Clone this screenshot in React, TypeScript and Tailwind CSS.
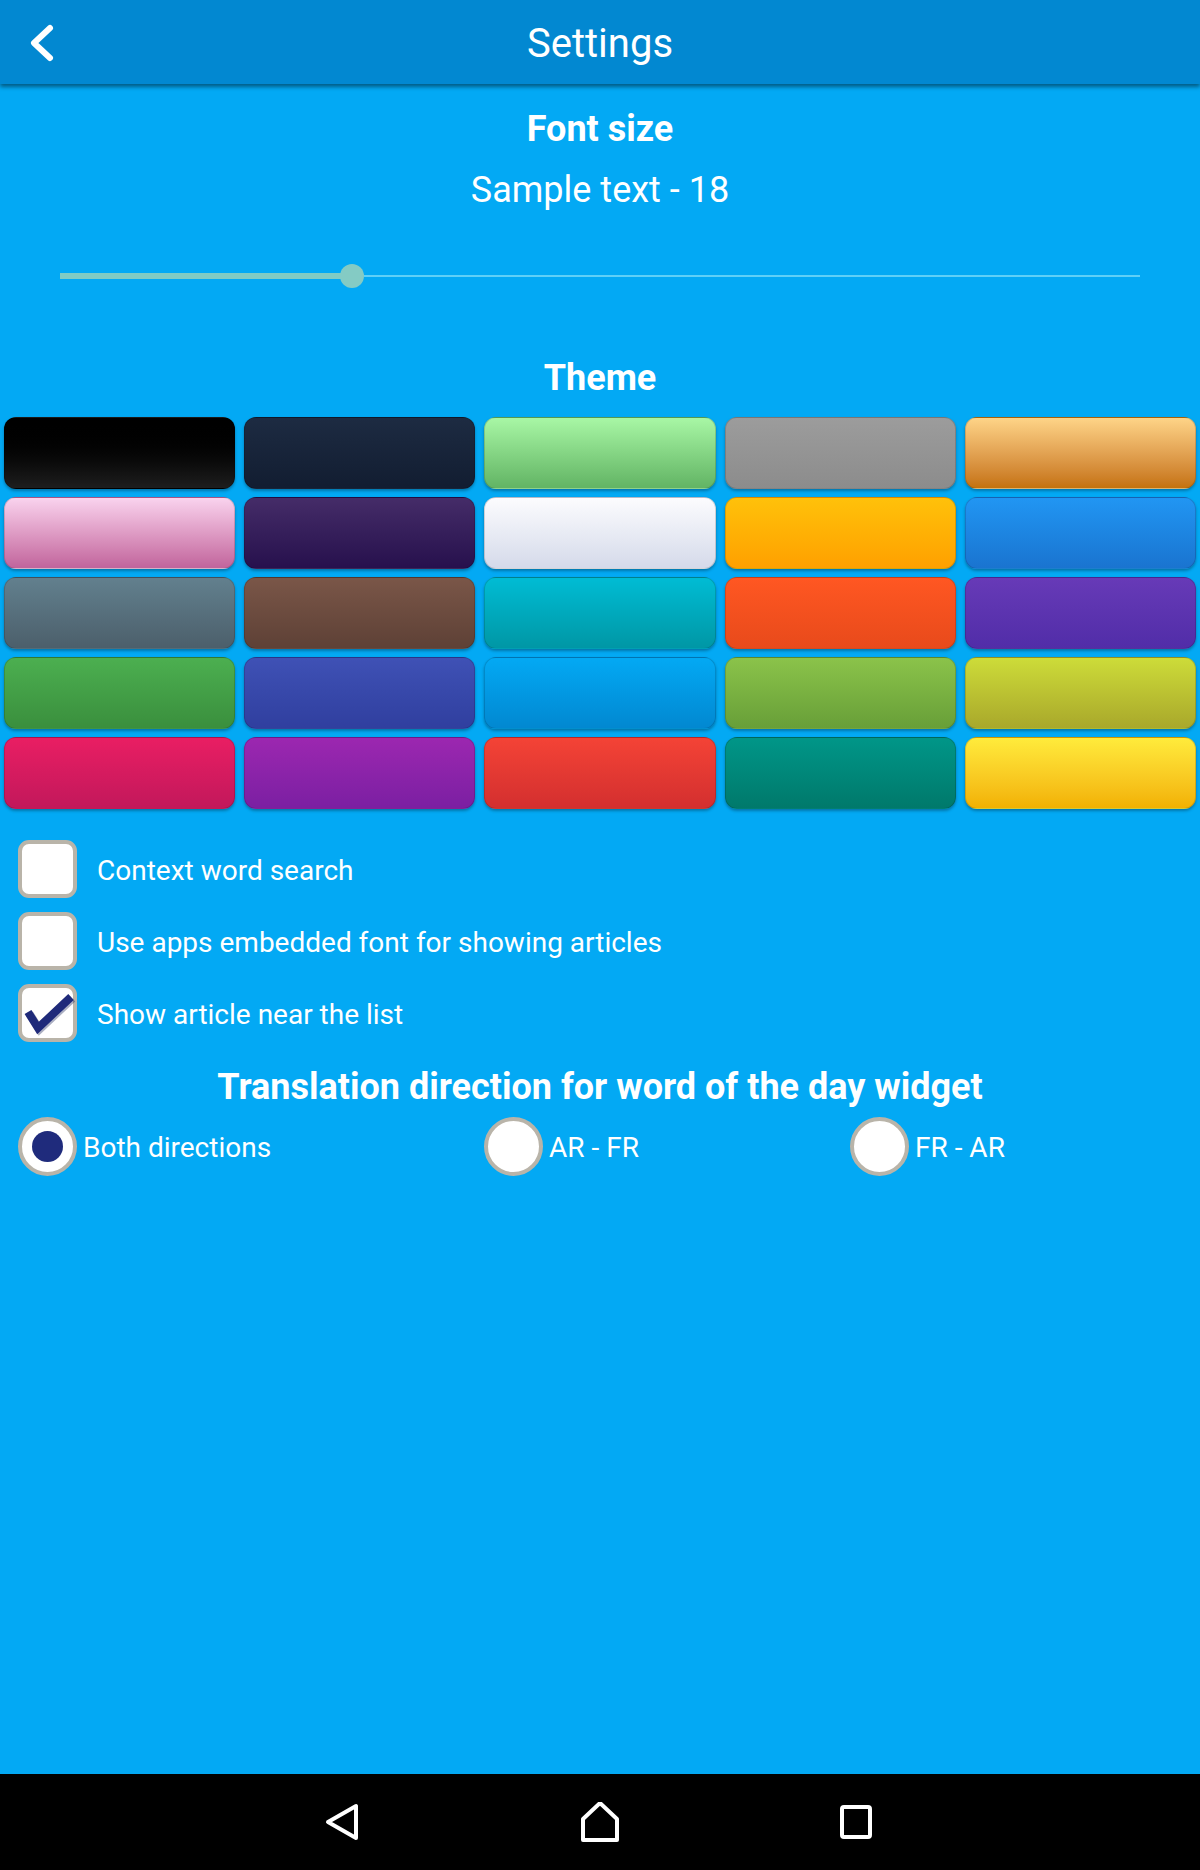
import React from "react";

const themes = [
  "from-[#000000] to-[#1e1e1e]",
  "from-[#1d2b42] to-[#121d31]",
  "from-[#a8f7a5] to-[#62b464]",
  "from-[#9c9c9c] to-[#8c8c8c]",
  "from-[#fed487] to-[#c5720a]",
  "from-[#f9d3ee] to-[#c1649c]",
  "from-[#452c68] to-[#27104d]",
  "from-[#fcfcfe] to-[#d5daea]",
  "from-[#ffc10a] to-[#ffa000]",
  "from-[#2196f3] to-[#1a74d0]",
  "from-[#62808e] to-[#4c5f6b]",
  "from-[#7a5648] to-[#5e4136]",
  "from-[#00bcd4] to-[#0097a5]",
  "from-[#ff5722] to-[#e84a1b]",
  "from-[#673ab7] to-[#512da8]",
  "from-[#4caf50] to-[#3a8f3d]",
  "from-[#3f51b5] to-[#303f9f]",
  "from-[#03a9f4] to-[#0288d1]",
  "from-[#8bc34a] to-[#689f38]",
  "from-[#cddc39] to-[#a9a82b]",
  "from-[#e91e63] to-[#c2185b]",
  "from-[#9c27b0] to-[#7b1fa2]",
  "from-[#f44336] to-[#d32f2f]",
  "from-[#009688] to-[#00796b]",
  "from-[#ffeb3b] to-[#f2b100]",
];

const options = [
  { label: "Context word search", checked: false },
  { label: "Use apps embedded font for showing articles", checked: false },
  { label: "Show article near the list", checked: true },
];

const directions = [
  { label: "Both directions", selected: true, width: "w-[466px]" },
  { label: "AR - FR", selected: false, width: "w-[366px]" },
  { label: "FR - AR", selected: false, width: "w-[300px]" },
];

function Checkbox({ checked }: { checked: boolean }) {
  return (
    <div className="relative w-[59px] h-[58px] shrink-0 rounded-[11px] border-[4px] border-[#b9b4a9] bg-white">
      {checked && (
        <svg
          className="absolute left-[-4px] top-[-4px] overflow-visible"
          width="59"
          height="58"
          viewBox="0 0 59 58"
        >
          <polyline
            points="10,28 20,44 53,13"
            fill="none"
            stroke="#0f1a50"
            strokeOpacity="0.35"
            strokeWidth="8"
            transform="translate(1.5,1.5)"
          />
          <polyline
            points="10,28 20,44 53,13"
            fill="none"
            stroke="#1f2a7a"
            strokeWidth="8"
          />
        </svg>
      )}
    </div>
  );
}

function Radio({ selected }: { selected: boolean }) {
  return (
    <div className="w-[59px] h-[59px] shrink-0 rounded-full border-[4px] border-[#b9b4a9] bg-white flex items-center justify-center">
      {selected && <div className="w-[31px] h-[31px] rounded-full bg-[#1f2b7c]"></div>}
    </div>
  );
}

export default function App() {
  return (
    <div
      className="w-[1200px] h-[1870px] flex flex-col bg-[#03a9f4] text-white overflow-hidden"
      style={{ fontFamily: "Roboto, 'Noto Sans', sans-serif" }}
    >
      {/* Header */}
      <div className="relative z-10 h-[84px] shrink-0 flex items-center justify-center bg-[#0288d1] shadow-[0_3px_4px_rgba(0,0,0,0.45)]">
        <svg className="absolute left-[24px] top-[20px]" width="36" height="44" viewBox="0 0 36 44">
          <polyline
            points="26,8 10,23 26,38"
            fill="none"
            stroke="white"
            strokeWidth="6"
            strokeLinecap="round"
            strokeLinejoin="round"
          />
        </svg>
        <h1 className="pt-[4px] text-[40px] leading-[48px] font-normal">Settings</h1>
      </div>

      {/* Content */}
      <div className="flex-1 flex flex-col">
        <h2 className="mt-[24px] text-center text-[36px] leading-[43px] font-bold">Font size</h2>
        <p className="mt-[18px] text-center text-[36px] leading-[43px]">Sample text - 18</p>

        {/* Slider */}
        <div className="mt-[52px] h-[24px] ml-[60px] w-[1080px] flex items-center">
          <div className="w-[292px] h-[6px] bg-[#80cbc4]"></div>
          <div className="w-[24px] h-[24px] -ml-[12px] rounded-full bg-[#84cbc4] shrink-0"></div>
          <div className="flex-1 h-[2px] bg-[#5fd0f7]"></div>
        </div>

        <h2 className="mt-[69px] text-center text-[36px] leading-[43px] font-bold">Theme</h2>

        {/* Theme grid */}
        <div className="mt-[17px] px-[4px] grid grid-cols-5 gap-x-[9px] gap-y-[8px]">
          {themes.map((t, i) => (
            <div
              key={i}
              className={`h-[72px] rounded-[12px] border border-black/15 bg-linear-to-b shadow-[0_2px_3px_rgba(0,0,0,0.3)] ${t}`}
            ></div>
          ))}
        </div>

        {/* Checkboxes */}
        <div className="mt-[31px] pl-[18px] flex flex-col gap-[14px]">
          {options.map((o, i) => (
            <div key={i} className="flex items-center gap-[20px]">
              <Checkbox checked={o.checked} />
              <span className="pt-[4px] text-[28px] leading-[34px]">{o.label}</span>
            </div>
          ))}
        </div>

        <h3 className="mt-[24px] text-center text-[36px] leading-[43px] font-bold">
          Translation direction for word of the day widget
        </h3>

        {/* Radios */}
        <div className="mt-[8px] pl-[18px] flex">
          {directions.map((d, i) => (
            <div key={i} className={`flex items-center gap-[6px] ${d.width}`}>
              <Radio selected={d.selected} />
              <span className="pt-[2px] text-[28px] leading-[34px]">{d.label}</span>
            </div>
          ))}
        </div>
      </div>

      {/* Navigation bar */}
      <div className="h-[96px] shrink-0 bg-black flex items-center justify-center gap-[216px]">
        <svg width="40" height="40" viewBox="0 0 40 40">
          <polygon
            points="4,20 32,4 32,36"
            fill="none"
            stroke="white"
            strokeWidth="4"
            strokeLinejoin="round"
          />
        </svg>
        <svg width="40" height="40" viewBox="0 0 40 40">
          <polygon
            points="3,38 3,17 20,1 37,17 37,38"
            fill="none"
            stroke="white"
            strokeWidth="4"
            strokeLinejoin="round"
          />
        </svg>
        <svg width="40" height="40" viewBox="0 0 40 40">
          <rect x="6" y="5" width="28" height="30" rx="2" fill="none" stroke="white" strokeWidth="4" />
        </svg>
      </div>
    </div>
  );
}
